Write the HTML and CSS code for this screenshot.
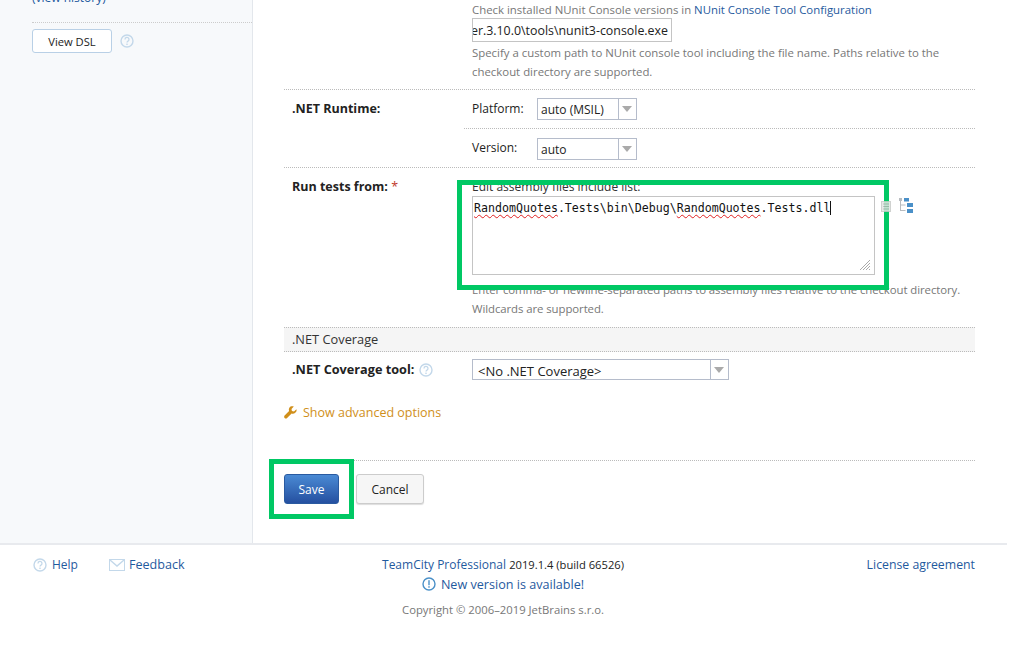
FILE: index.html
```html
<!DOCTYPE html>
<html lang="en">
<head>
<meta charset="utf-8">
<title>Build step</title>
<link rel="stylesheet" href="styles.css">
</head>
<body>
<div class="page">
  <div class="layout">
    <aside class="sidebar">
      <div class="history"><a href="#">(view history)</a></div>
      <div class="dsl">
        <button class="btn-dsl">View DSL</button>
        <svg class="help" width="14" height="14" viewBox="0 0 14 14"><circle cx="7" cy="7" r="6" fill="none" stroke="#c3d8ea" stroke-width="1.4"/><path d="M5 5.4a2 2 0 1 1 3 1.7c-.7.4-1 .8-1 1.5" fill="none" stroke="#c3d8ea" stroke-width="1.3"/><rect x="6.3" y="9.6" width="1.4" height="1.4" fill="#c3d8ea"/></svg>
      </div>
    </aside>
    <main class="content">
      <div class="row row-path">
        <div class="label"></div>
        <div class="field">
          <div class="hint">Check installed NUnit Console versions in <a href="#">NUnit Console Tool Configuration</a></div>
          <div class="text-input"><span class="text-clip">er.3.10.0\tools\nunit3-console.exe</span></div>
          <div class="hint hint-block">Specify a custom path to NUnit console tool including the file name. Paths relative to the checkout directory are supported.</div>
        </div>
      </div>
      <div class="row row-runtime">
        <div class="label label-runtime">.NET Runtime:</div>
        <div class="subrows">
          <div class="subrow">
            <span class="sublabel">Platform:</span>
            <div class="select select-sm"><span class="select-text">auto (MSIL)</span><span class="arrow"></span></div>
          </div>
          <div class="subrow subrow-last">
            <span class="sublabel">Version:</span>
            <div class="select select-sm"><span class="select-text">auto</span><span class="arrow"></span></div>
          </div>
        </div>
      </div>
      <div class="row row-tests">
        <div class="label label-tests">Run tests from: <span class="req">*</span></div>
        <div class="field">
          <div class="edit-label">Edit assembly files include list:</div>
          <div class="area-line">
            <div class="textarea"><span class="sq">RandomQuotes</span>.Tests\bin\Debug\<span class="sq">RandomQuotes</span>.Tests.dll<span class="caret"></span>
              <svg class="grip" width="12" height="12" viewBox="0 0 12 12"><path d="M11 1 1 11M11 4 4 11M11 7 7 11M11 10 10 11" stroke="#aaa" stroke-width="1"/></svg>
            </div>
            <div class="area-icons">
              <svg class="icon-list" width="10" height="11" viewBox="0 0 10 11"><rect x=".5" y=".5" width="9" height="10" fill="#e4e6e4" stroke="#c8cbc8"/><path d="M2 3h6M2 5.5h6M2 8h6" stroke="#b4b8b4"/></svg>
              <svg width="14" height="15" viewBox="0 0 14 15"><rect x="0" y="0" width="3" height="3" fill="#b8bcc0"/><path d="M1.5 3v10M1.5 7h5M1.5 12.5h5" stroke="#b8bcc0" fill="none"/><rect x="5" y="0" width="5" height="3.5" fill="#4a90c8"/><rect x="8" y="5" width="6" height="4" fill="#4a90c8"/><rect x="8" y="11" width="6" height="4" fill="#4a90c8"/></svg>
            </div>
          </div>
          <div class="hint hint-tests">Enter comma- or newline-separated paths to assembly files relative to the checkout directory. Wildcards are supported.</div>
        </div>
      </div>
      <div class="section">.NET Coverage</div>
      <div class="row-coverage">
        <div class="label label-coverage">.NET Coverage tool:
          <svg class="help-inline" width="14" height="14" viewBox="0 0 14 14"><circle cx="7" cy="7" r="6" fill="none" stroke="#c3d8ea" stroke-width="1.4"/><path d="M5 5.4a2 2 0 1 1 3 1.7c-.7.4-1 .8-1 1.5" fill="none" stroke="#c3d8ea" stroke-width="1.3"/><rect x="6.3" y="9.6" width="1.4" height="1.4" fill="#c3d8ea"/></svg>
        </div>
        <div class="field">
          <div class="select select-lg"><span class="select-text">&lt;No .NET Coverage&gt;</span><span class="arrow"></span></div>
        </div>
      </div>
      <div class="advanced">
        <svg width="13" height="13" viewBox="0 0 13 13"><path d="M12.4 3.2 10 5.4 7.9 4.9 7.5 2.9 9.8.6C8.2-.1 6.3.3 5.4 1.7c-.7 1-.7 2.2-.3 3.3L.6 9.5c-.6.6-.6 1.7 0 2.4.7.7 1.8.7 2.5 0l4.5-4.5c1.1.4 2.4.3 3.4-.4 1.4-1 1.9-2.3 1.4-3.8z" fill="#d08f1a"/></svg>
        <a href="#">Show advanced options</a>
      </div>
      <div class="actions">
        <button class="btn-save">Save</button>
        <button class="btn-cancel">Cancel</button>
      </div>
    </main>
  </div>
  <footer class="footer">
    <div class="foot-left">
      <a href="#" class="foot-link"><svg width="14" height="14" viewBox="0 0 14 14"><circle cx="7" cy="7" r="6" fill="none" stroke="#c3d8ea" stroke-width="1.4"/><path d="M5 5.4a2 2 0 1 1 3 1.7c-.7.4-1 .8-1 1.5" fill="none" stroke="#c3d8ea" stroke-width="1.3"/><rect x="6.3" y="9.6" width="1.4" height="1.4" fill="#c3d8ea"/></svg>Help</a>
      <a href="#" class="foot-link foot-feedback"><svg width="16" height="12" viewBox="0 0 16 12"><rect x=".5" y=".5" width="15" height="11" fill="none" stroke="#c3d8ea"/><path d="M1 1l7 6 7-6" fill="none" stroke="#c3d8ea" stroke-width="1.4"/></svg>Feedback</a>
    </div>
    <div class="foot-center">
      <div class="foot-ver"><a href="#">TeamCity Professional</a> <span class="foot-build">2019.1.4 (build 66526)</span></div>
      <div class="foot-new"><svg width="14" height="14" viewBox="0 0 14 14"><circle cx="7" cy="7" r="6" fill="none" stroke="#4a90c8" stroke-width="1.4"/><rect x="6.3" y="3.2" width="1.4" height="5" fill="#4a90c8"/><rect x="6.3" y="9.2" width="1.4" height="1.5" fill="#4a90c8"/></svg><a href="#">New version is available!</a></div>
      <div class="foot-copy">Copyright © 2006–2019 JetBrains s.r.o.</div>
    </div>
    <div class="foot-right"><a href="#">License agreement</a></div>
  </footer>
</div>
<div class="mark mark-area"></div>
<div class="mark mark-save"></div>
</body>
</html>
```
FILE: styles.css
```css
* { box-sizing: border-box; }
html, body { margin: 0; padding: 0; background: #fff; overflow: hidden; height: 100%; }
body { font-family: "Open Sans", "Noto Sans", sans-serif; font-size: 12px; line-height: 19px; color: #222; position: relative; }
a { color: #1f5a9e; text-decoration: none; }
.page { width: 1007px; margin-top: -20px; }
.layout { display: flex; height: 563px; }
.sidebar { width: 253px; flex: none; background: #f7f9fb; border-right: 1px solid #e3e7ec; padding-left: 32px; }
.history { height: 43px; padding-top: 8px; border-bottom: 1px dotted #ccc; }
.dsl { display: flex; align-items: center; gap: 8px; margin-top: 6px; }
.btn-dsl { width: 80px; height: 24px; background: #fff; border: 1px solid #b9d0e6; border-radius: 3px; font: inherit; font-size: 11.2px; color: #222; padding: 0; }
.content { flex: 1; padding: 0 32px 0 31px; min-width: 0; }
.row { display: flex; border-bottom: 1px dotted #bbb; }
.label { width: 180px; flex: none; padding-left: 8px; font-weight: 700; font-size: 12.5px; color: #222; }
.field { flex: 1; padding-left: 8px; min-width: 0; }
.row-path { height: 110px; padding-top: 20px; }
.hint { color: #777; font-size: 11.4px; }
.text-input { width: 200px; height: 24px; border: 1px solid #c4c4c4; background: #fff; color: #222; font-size: 12.4px; overflow: hidden; display: flex; justify-content: flex-end; align-items: center; padding-right: 3px; white-space: nowrap; margin-top: -1px; }
.text-clip { flex: none; }
.hint-block { margin-top: 1px; width: 490px; }
.row-runtime { height: 78px; }
.label-runtime { padding-top: 9px; }
.subrows { flex: 1; min-width: 0; }
.subrow { height: 39px; display: flex; align-items: center; padding-left: 8px; border-bottom: 1px dotted #bbb; }
.subrow-last { border-bottom: 0; }
.sublabel { width: 65px; flex: none; margin-bottom: 2px; }
.select { display: flex; height: 22px; border: 1px solid #b5bccb; background: #fff; align-items: flex-end; }
.select-sm { width: 100px; }
.select-lg { width: 257px; height: 21px; }
.select-text { flex: 1; padding-left: 3px; white-space: nowrap; color: #222; line-height: 19px; }
.select-lg .select-text { padding-left: 5px; font-size: 13px; line-height: 16px; }
.arrow { width: 18px; height: 100%; flex: none; border-left: 1px solid #b5bccb; position: relative; align-self: stretch; }
.arrow::after { content: ""; position: absolute; left: 3px; top: 7px; border-left: 5px solid transparent; border-right: 5px solid transparent; border-top: 6px solid #aaa; }
.row-tests { height: 159px; border-bottom: 0; }
.label-tests { padding-top: 9px; }
.req { color: #c0392b; font-weight: 400; }
.edit-label { padding-top: 9px; height: 28px; color: #333; }
.area-line { display: flex; gap: 6px; }
.textarea { width: 403px; height: 79px; border: 1px solid #c4c4c4; background: #fff; position: relative; padding: 3px 1px; font-family: "DejaVu Sans Mono", monospace; font-size: 11.62px; line-height: 16px; color: #111; white-space: nowrap; }
.sq { text-decoration: underline wavy #e02020 1px; text-underline-offset: 2px; }
.caret { display: inline-block; width: 1px; height: 14px; background: #111; vertical-align: -3px; }
.grip { position: absolute; right: 3px; bottom: 3px; }
.area-icons { display: flex; gap: 8px; padding-top: 2px; align-items: flex-start; position: relative; z-index: 2; }
.icon-list { margin-top: 3px; opacity: .85; }
.hint-tests { margin-top: 5px; width: 510px; letter-spacing: -.08px; }
.section { height: 25px; background: #f5f5f5; border-top: 1px dotted #bbb; border-bottom: 1px dotted #bbb; padding-left: 8px; line-height: 23px; color: #333; font-size: 12.8px; }
.row-coverage { display: flex; padding-top: 7px; height: 41px; }
.label-coverage { display: flex; align-items: center; gap: 5px; height: 21px; white-space: nowrap; font-size: 12.7px; }
.advanced { display: flex; align-items: center; gap: 6px; margin-top: 10px; height: 19px; font-size: 12.5px; }
.advanced a { color: #d08f1a; }
.actions { margin-top: 38px; border-top: 1px dotted #bbb; padding-top: 13px; display: flex; align-items: flex-start; gap: 17px; }
.btn-save { width: 55px; height: 30px; border: 1px solid #2a5aa0; border-radius: 3px; background: linear-gradient(#4a8ad4, #2550a0); color: #fff; font: inherit; padding: 0; }
.btn-cancel { width: 68px; height: 30px; border: 1px solid #ccc; border-radius: 3px; background: #f6f6f6; color: #222; font: inherit; padding: 0; box-shadow: 0 1px 1px #ddd; }
.footer { border-top: 2px solid #e8eaee; display: flex; padding: 10px 32px 0 33px; height: 100px; }
.foot-left { width: 300px; display: flex; gap: 31px; height: 19px; }
.foot-link { display: flex; align-items: center; gap: 5px; }
.foot-feedback { font-size: 12.6px; gap: 4px; }
.foot-center { width: 340px; text-align: center; }
.foot-ver { height: 19px; }
.foot-build { font-size: 11.2px; }
.foot-new { display: flex; justify-content: center; align-items: center; gap: 5px; height: 20px; font-size: 12.6px; }
.foot-copy { color: #777; margin-top: 6px; font-size: 11.3px; }
.foot-right { flex: 1; text-align: right; font-size: 12.3px; }
.mark { position: absolute; border: 5px solid #00c864; pointer-events: none; }
.mark-area { left: 457px; top: 180px; width: 432px; height: 110px; }
.mark-save { left: 269px; top: 459px; width: 85px; height: 60px; }
```
